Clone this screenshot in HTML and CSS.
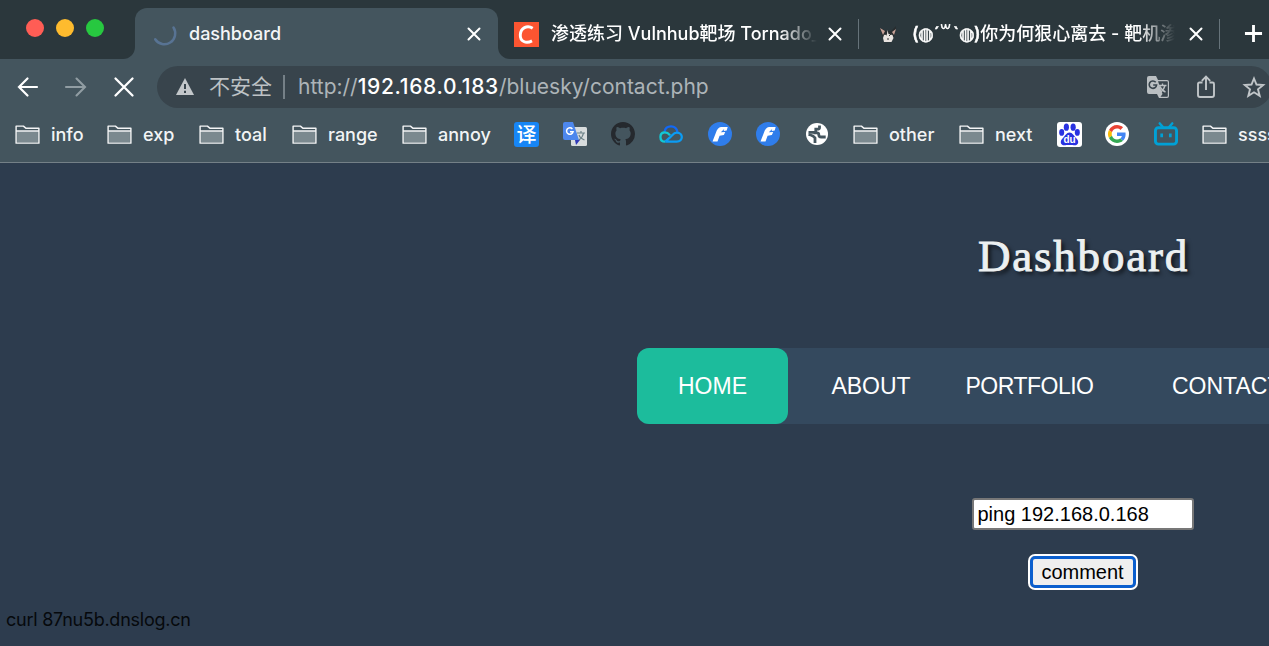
FILE: index.html
```html
<!DOCTYPE html>
<html lang="zh-CN">
<head>
<meta charset="utf-8">
<title>dashboard</title>
<link rel="stylesheet" href="styles.css">
</head>
<body>
<svg width="0" height="0" class="defs">
  <symbol id="folder" viewBox="0 0 26 20"><path d="M2 6.5h22V18.3H2z" fill="#7b898f"/><path d="M1 1.2h7.7l2.8 2.3H25v15.6H1zM1 6.3h24" fill="none" stroke="#f4f5f6" stroke-width="1.5" stroke-linejoin="round"/></symbol>
  <symbol id="close" viewBox="0 0 14 14"><path d="M1.500 1.500l11 11M12.500 1.500l-11 11" stroke="#fff" stroke-width="2" stroke-linecap="round"/></symbol>
  <symbol id="feather" viewBox="0 0 24 24"><circle cx="12" cy="12" r="12" fill="#2f7deb"/><path d="M4.500 19.500L7.800 11Q9.500 5.500 13 5h6.700l-1 3.600-3 .4.500-2-3.400 3.200 4.400-.2-1.300 3-4.300.8L9.500 19.500z" fill="#fff"/></symbol>
</svg>
<div class="window">
  <header class="tabstrip">
    <div class="controls"><i class="dot red"></i><i class="dot yellow"></i><i class="dot green"></i></div>
    <div class="active-wrap">
      <div class="tab active">
        <svg class="spinner" viewBox="0 0 24 24" fill="none"><path d="M20.500 5.500A10.500 10.500 0 0 1 2.200 17.300" stroke="#587393" stroke-width="2.500" stroke-linecap="round"/></svg>
        <span class="title t1">dashboard</span>
        <svg class="x"><use href="#close"/></svg>
      </div>
    </div>
    <div class="inactive">
      <div class="tab second">
        <svg class="fav" viewBox="0 0 25 25"><path d="M0 0h25v25H0z" fill="#fc5531"/><path d="M18.700 6.200C13 2.700 6.700 6 6.300 12.800c-.3 6.800 5.700 9.100 11.700 6.100" stroke="#fff" stroke-width="2.900" fill="none"/></svg>
        <span class="title t2 fade">渗透练习 Vulnhub靶场 Tornado_</span>
        <svg class="x"><use href="#close"/></svg>
      </div>
      <div class="tab third">
        <svg class="cat" viewBox="0 0 18 16"><path d="M1 2l6 3h5l5-5-1 8-3 6H5L3 9z" fill="#282c2e"/><path d="M1 2l5 3-2 4zM13 6l4-3-2 6z" fill="#c5a096"/><path d="M8.500 4l1 4 4 1 1 3-2 4H5l-1-4 1-3 3-1z" fill="#e9e4e0"/><path d="M6 8l2 1M12 8l-2 2M8 13h2" stroke="#333"/></svg>
        <span class="title t3 fade"><span class="kaomoji">(◍´꒳`◍)</span>你为何狠心离去 - 靶机渗</span>
        <svg class="x"><use href="#close"/></svg>
      </div>
      <svg class="plus" viewBox="0 0 20 20"><path d="M10 1v18M1 10h18" stroke="#fff" stroke-width="3"/></svg>
    </div>
  </header>
  <nav class="toolbar">
    <svg class="nav-icon" viewBox="0 0 22 22"><path d="M20 11H2M10.500 2.500L2 11l8.500 8.500" stroke="#fff" stroke-width="2.200" fill="none" stroke-linecap="round"/></svg>
    <svg class="nav-icon" viewBox="0 0 22 22"><path d="M1 11h18M11.500 2.500L20 11l-8.500 8.500" stroke="#919da3" stroke-width="2.100" fill="none" stroke-linecap="round"/></svg>
    <svg class="nav-icon" viewBox="0 0 22 22"><path d="M2.500 2.500l17 17M19.500 2.500l-17 17" stroke="#fff" stroke-width="2.300" stroke-linecap="round"/></svg>
    <div class="address">
      <svg class="warn" viewBox="0 0 18 17"><path d="M9 0l9 17H0z" fill="#c3c7ca"/><path d="M9 6v5M9 12.700v2.200" stroke="#38444c" stroke-width="2"/></svg>
      <span class="insecure">不安全</span><i class="bar"></i>
      <span class="url">http://<b>192.168.0.183</b>/bluesky/contact.php</span>
      <div class="actions">
        <svg class="tr" viewBox="0 0 22 22"><path d="M2 0h7l2 4h9q2 0 2 2v14q0 2-2 2h-8l-2-4H2q-2 0-2-2V2q0-2 2-2z" fill="#babfc2"/><path d="M11 5.200H20q.8 0 .8.800v14q0 .8-.8.800h-6.500l2-2.800z" fill="#38444c"/><path d="M8.700 6.200A3.700 3.700 0 1 0 9.600 9H6.200" fill="none" stroke="#38444c" stroke-width="1.600"/><path d="M11.500 9.500h8M15.500 7.500v2M18 9.500c-.6 3-2.500 5-4 6.500M13 10.500c1 2.500 3 4.500 5.500 5.500" stroke="#babfc2" stroke-width="1.400" fill="none"/></svg>
        <svg class="share" viewBox="0 0 18 23"><path d="M5.500 7.500H2.500q-1.500 0-1.500 1.500v11q0 2 2 2h12q2 0 2-2V9q0-1.500-1.500-1.500h-3M9 15V2M4.800 5.800L9 1.600l4.200 4.200" stroke="#c0c5c8" stroke-width="1.900" fill="none"/></svg>
        <svg class="star" viewBox="0 0 22 22"><path d="M11 2.500l2.500 6 6.700.5-5.200 4.300 1.700 6.600-5.700-3.600-5.700 3.600L7 13.300 1.800 9l6.700-.5z" stroke="#c0c5c8" stroke-width="1.900" fill="none"/></svg>
      </div>
    </div>
  </nav>
  <nav class="bookmarks">
    <a><svg class="folder"><use href="#folder"/></svg><span>info</span></a>
    <a><svg class="folder"><use href="#folder"/></svg><span>exp</span></a>
    <a><svg class="folder"><use href="#folder"/></svg><span>toal</span></a>
    <a><svg class="folder"><use href="#folder"/></svg><span>range</span></a>
    <a><svg class="folder"><use href="#folder"/></svg><span>annoy</span></a>
    <a><i class="yi">译</i></a>
    <a><svg class="bi" viewBox="0 0 24 24"><rect x="8" y="5" width="16" height="19" rx="1.500" fill="#d8dcdd"/><path d="M12 18h5l-4 5z" fill="#3039b8"/><path d="M2 0h8l6 18H2q-2 0-2-2V2q0-2 2-2z" fill="#4d87ed"/><path d="M9.400 6.900a3.300 3.300 0 1 0 .7 2.800H7" fill="none" stroke="#fff" stroke-width="1.500"/><path d="M14 11h8M18 9v2M20.500 11c-.5 3-2 5-4.500 7M16 13c1 3 3 4 5.500 5" fill="none" stroke="#6d8288" stroke-width="1.200"/></svg></a>
    <a><svg class="bi" viewBox="0 0 16 16"><path fill="#25292e" fill-rule="evenodd" d="M8 0C3.580 0 0 3.580 0 8c0 3.540 2.290 6.530 5.470 7.590.4.070.55-.17.55-.38 0-.19-.01-.82-.01-1.490-2.010.37-2.530-.49-2.690-.94-.09-.23-.48-.94-.82-1.130-.28-.15-.68-.52-.01-.53.63-.01 1.080.58 1.230.82.720 1.210 1.870.870 2.330.660.070-.52.280-.87.510-1.070-1.780-.2-3.640-.89-3.640-3.950 0-.87.310-1.590.820-2.150-.08-.2-.36-1.020.080-2.120 0 0 .67-.21 2.200.820.640-.18 1.320-.27 2-.27s1.360.09 2 .27c1.530-1.040 2.200-.82 2.200-.82.440 1.100.160 1.920.080 2.120.51.560.820 1.270.820 2.150 0 3.070-1.870 3.750-3.650 3.950.290.250.540.730.540 1.480 0 1.070-.01 1.930-.01 2.200 0 .21.150.46.550.38A8.010 8.010 0 0 0 16 8c0-4.420-3.580-8-8-8z"/></svg></a>
    <a><svg class="bi" viewBox="0 0 25 24"><g fill="none" stroke-width="2.400"><path d="M5.800 9.500C6.500 5.500 9.300 4 12.500 4s6 1.800 6.800 6" stroke="#1269f6"/><path d="M11.500 13.200C8 9.200 1.500 9.200 1.500 15c0 3 2 5 5 5" stroke="#12c9d6"/><path d="M6.500 20h12c7 0 7-9.500 0-9.500-3 0-4 2-6.500 4.500L6.500 20" stroke="#0b9cf4"/></g></svg></a>
    <a><svg class="bi"><use href="#feather"/></svg></a>
    <a><svg class="bi"><use href="#feather"/></svg></a>
    <a><svg class="bi globe" viewBox="0 0 22 22"><circle cx="11" cy="11" r="11" fill="#fff"/><g fill="none" stroke="#44555e" stroke-width="2.800"><path d="M13.500 2.500v2.300q0 1.400-2 1.400H9.800v2.300q0 .9-1.800.9H2.500"/><path d="M7.500 9.800H11q1.800 0 1.800 1.900 0 2.300 2.400 2.300h4.500"/><path d="M2.500 11.500q5 1 6.500 3.500v5"/></g></svg></a>
    <a><svg class="folder"><use href="#folder"/></svg><span>other</span></a>
    <a><svg class="folder"><use href="#folder"/></svg><span>next</span></a>
    <a><i class="baidu"><svg viewBox="0 0 24 24"><g fill="#2932e1"><ellipse cx="9" cy="5" rx="2.500" ry="3.500"/><ellipse cx="15.500" cy="5" rx="2.500" ry="3.500"/><ellipse cx="4.500" cy="10" rx="2.400" ry="3.200"/><ellipse cx="19.500" cy="10" rx="2.400" ry="3.200"/><path d="M12 10c3 0 4 3 6.500 5.500 4 4 1 8-3.500 6.500H9c-4.500 1.500-7.500-2.500-3.500-6.500C8 13 9 10 12 10z"/></g></svg><em>du</em></i></a>
    <a><svg class="bi" viewBox="0 0 48 48"><circle cx="24" cy="24" r="24" fill="#fff"/><g transform="translate(6 6) scale(.75)"><path fill="#ea4335" d="M24 9.500c3.540 0 6.710 1.220 9.210 3.600l6.850-6.850C35.900 2.380 30.470 0 24 0 14.620 0 6.510 5.380 2.560 13.220l7.980 6.190C12.430 13.720 17.740 9.500 24 9.500z"/><path fill="#4285f4" d="M46.980 24.550c0-1.570-.15-3.090-.38-4.550H24v9.020h12.940c-.58 2.960-2.260 5.480-4.780 7.180l7.730 6c4.510-4.180 7.090-10.360 7.090-17.650z"/><path fill="#fbbc05" d="M10.530 28.590A14.500 14.500 0 0 1 10.530 19.410l-7.970-6.190a23.900 23.900 0 0 0 0 21.560z"/><path fill="#34a853" d="M24 48c6.480 0 11.930-2.130 15.890-5.810l-7.730-6c-2.150 1.450-4.920 2.300-8.160 2.300-6.260 0-11.570-4.220-13.470-9.910l-7.980 6.190C6.510 42.620 14.620 48 24 48z"/></g></svg></a>
    <a><svg class="bi" viewBox="0 0 25 25"><path d="M6 1.500l3 3.500M19 1.500l-3 3.500" stroke="#00a1d6" stroke-width="2.600" stroke-linecap="round"/><rect x="1.500" y="6" width="22" height="17" rx="3" fill="none" stroke="#00a1d6" stroke-width="3"/><path d="M8 12v4M17 12v4" stroke="#00a1d6" stroke-width="2.800"/></svg></a>
    <a><svg class="folder"><use href="#folder"/></svg><span>ssss</span></a>
  </nav>
  <main class="page">
    <div class="center">
      <h1>Dashboard</h1>
      <ul class="menu"><li class="home"><span>HOME</span></li><li class="about"><span>ABOUT</span></li><li class="portfolio"><span>PORTFOLIO</span></li><li class="contact"><span>CONTACT</span></li></ul>
      <form><input class="field" type="text" value="ping 192.168.0.168"><button type="button" class="submit">comment</button></form>
    </div>
    <p class="output">curl 87nu5b.dnslog.cn</p>
  </main>
</div>
</body>
</html>
```
FILE: styles.css
```css
* { box-sizing: border-box; }
body { margin: 0; width: 1269px; height: 646px; overflow: hidden; background: #2d3c4e; font-family: Inter, "Noto Sans CJK SC", sans-serif; }
svg { display: block; flex: none; overflow: visible; }
.defs { position: absolute; }
.window { width: 1269px; height: 646px; overflow: hidden; }
.tabstrip { display: flex; height: 59px; background: #44555e; }
.controls { display: flex; gap: 12px; width: 135px; padding: 19px 0 0 26px; background: #2b373c; border-bottom-right-radius: 12px; }
.dot { width: 18px; height: 18px; border-radius: 50%; flex: none; }
.red { background: #ff5d55; }
.yellow { background: #febb2e; }
.green { background: #27c840; }
.active-wrap { width: 363px; padding-top: 8px; background: linear-gradient(#2b373c 30px, #44555e 30px); }
.tab { display: flex; align-items: center; }
.active { height: 51px; padding-left: 18px; background: #44555e; border-radius: 12px 12px 0 0; }
.spinner { width: 24px; height: 24px; margin-right: 12px; }
.title { flex: none; white-space: nowrap; overflow: hidden; font-size: 18px; line-height: 28px; font-weight: 500; color: #fff; }
.t1 { width: 278px; color: #f4f6f7; }
.t2 { width: 266px; margin: 0 11px 0 12px; }
.t3 { width: 263px; margin: 0 14px 0 15px; }
.kaomoji { letter-spacing: -.45px; -webkit-text-stroke: .5px #fff; }
.fade { mask-image: linear-gradient(90deg, #000 86%, transparent); }
.x { width: 14px; height: 14px; }
.inactive { display: flex; align-items: center; width: 771px; background: #2b373c; border-bottom-left-radius: 12px; }
.inactive .tab { flex: none; height: 30px; margin-top: 9px; border-right: 1px solid #66737a; }
.second { width: 361px; padding-left: 16px; }
.third { width: 361px; padding-left: 20px; }
.fav { width: 25px; height: 25px; }
.cat { width: 18px; height: 16px; }
.plus { width: 19px; height: 19px; margin: 8px 0 0 24px; }
.toolbar { display: flex; align-items: center; height: 55px; background: #44555e; padding-left: 17px; }
.nav-icon { width: 22px; height: 22px; margin-right: 26px; }
.address { display: flex; align-items: center; flex: none; width: 1115px; height: 42px; border-radius: 21px; background: #38444c; margin-left: -4px; padding-left: 19px; }
.warn { width: 18px; height: 17px; }
.insecure { flex: none; width: 64px; margin-left: 15px; font-size: 21px; line-height: 30px; color: #bdc2c5; }
.bar { flex: none; width: 2px; height: 24px; margin: 0 13px 0 10px; background: #758087; }
.url { flex: none; width: 412px; white-space: nowrap; font-size: 21px; line-height: 30px; color: #adb4b8; }
.url b { font-weight: 500; letter-spacing: .67px; color: #fff; }
.actions { display: flex; flex: none; align-items: center; margin-left: 437px; }
.tr { width: 22px; height: 22px; }
.share { width: 18px; height: 23px; margin: 0 28px; }
.star { width: 22px; height: 22px; }
.bookmarks { display: grid; grid-template-columns: 92px 92px 93px 110px 112px 49px 48px 48px 49px 48px 49px 48px 106px 98px 48px 49px 48px 80px; align-items: center; height: 49px; padding: 0 0 8px 15px; background: #44555e; border-bottom: 1px solid #748087; }
.bookmarks a { display: flex; align-items: center; }
.folder { width: 25px; height: 19px; }
.bookmarks span { margin: 2px 0 0 11px; font-size: 18px; line-height: 24px; font-weight: 500; color: #f2f4f5; }
.bi { width: 24px; height: 24px; }
.globe { width: 22px; height: 22px; margin-left: 1px; }
.yi { width: 25px; height: 25px; border-radius: 3px; background: #1786f6; color: #fff; font: normal 500 20px/24px "Noto Sans CJK SC", sans-serif; text-align: center; }
.baidu { display: block; width: 25px; height: 25px; border-radius: 3px; background: #fff; position: relative; }
.baidu em { position: absolute; left: 0; top: 12px; width: 25px; text-align: center; font: bold 10px/11px "Liberation Sans", sans-serif; color: #fff; }
.page { height: 483px; padding-top: 64px; background: #2d3c4e; }
.center { width: 893px; margin-left: 637px; display: flex; flex-direction: column; align-items: center; }
h1 { margin: 0; height: 121px; font: normal 45px/58px "Liberation Serif", serif; letter-spacing: 1.800px; color: #ecf0f1; -webkit-text-stroke: .9px #ecf0f1; text-shadow: 3px 3px 4px #000b; }
.menu { display: flex; width: 893px; height: 76px; margin: 0; padding: 0; list-style: none; background: #34495e; border-radius: 12px; font: 23px/76px "Liberation Sans", sans-serif; color: #fff; }
.menu li { flex: none; }
.home { width: 151px; text-align: center; border-radius: 12px; background: #1cbc9c; }
.about { width: 166px; text-align: center; }
.portfolio { width: 151px; text-align: center; letter-spacing: -.5px; }
.contact { padding-left: 67px; }
form { display: flex; flex-direction: column; align-items: center; margin: 74px 2px 0 0; }
.field { width: 222px; height: 32px; padding: 0 4px; border: 2px solid #777; border-radius: 3px; background: #fff; font: 20px "Liberation Sans", sans-serif; color: #000; }
.submit { width: 106px; height: 32px; margin-top: 26px; padding: 0; border: 3px solid #0b5fce; border-radius: 5px; outline: 2px solid #fff; background: #efefef; font: 20px/26px "Liberation Sans", sans-serif; color: #000; }
.output { margin: 20px 0 0 6px; font: 18px/24px Inter, sans-serif; letter-spacing: -.24px; color: #06090c; }
```
